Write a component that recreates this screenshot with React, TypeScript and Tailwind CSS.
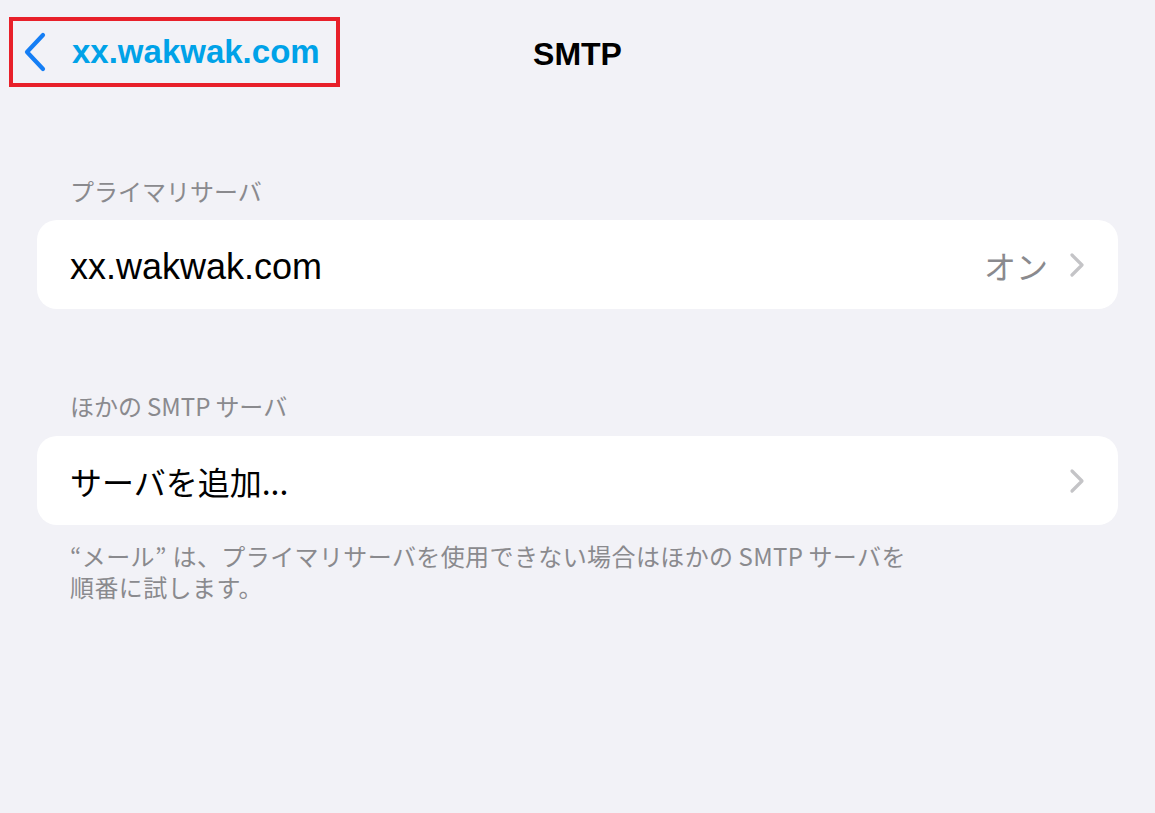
const jp = "font-['Noto_Sans_CJK_JP',sans-serif]";
const latin = "font-['Liberation_Sans','Noto_Sans_CJK_JP',sans-serif]";

const RowChevron = () => (
  <svg width="18" height="26" viewBox="0 0 18 26" className="shrink-0">
    <polyline
      points="4,3 14,13 4,23"
      fill="none"
      stroke="#c4c4c7"
      strokeWidth="3.2"
      strokeLinecap="round"
      strokeLinejoin="round"
    />
  </svg>
);

const SectionHeader = ({ children }: { children: React.ReactNode }) => (
  <div className={`${jp} px-[33px] text-[24px] leading-[30px] text-[#8a8a8e]`}>{children}</div>
);

export default function App() {
  return (
    <div className="w-[1155px] h-[813px] bg-[#f2f2f7] overflow-hidden">
      {/* Nav bar */}
      <div className="relative h-[87px]">
        <div className="absolute left-[9px] top-[17px] w-[331px] h-[70px] border-4 border-[#e8202a] flex items-center">
          <svg width="24" height="40" viewBox="0 0 24 40" className="ml-[10px] shrink-0">
            <polyline
              points="20,3 4,20 20,37"
              fill="none"
              stroke="#157ef5"
              strokeWidth="4.2"
              strokeLinecap="round"
              strokeLinejoin="round"
            />
          </svg>
          <span className={`${latin} ml-[25px] text-[33px] leading-[40px] font-bold text-[#00a2e8]`}>
            xx.wakwak.com
          </span>
        </div>
        <div className={`${latin} absolute left-0 right-0 top-[34px] text-center text-[32px] leading-[40px] font-bold text-black`}>
          SMTP
        </div>
      </div>

      <div className="px-[37px]">
        {/* Primary server */}
        <div className="mt-[89px]">
          <SectionHeader>プライマリサーバ</SectionHeader>
        </div>
        <div className="mt-[14px] h-[89px] rounded-[20px] bg-white flex items-center pl-[33px] pr-[32px]">
          <span className={`${latin} flex-1 pt-[4px] text-[36px] leading-[40px] text-black`}>xx.wakwak.com</span>
          <span className={`${jp} text-[32px] leading-[40px] text-[#8a8a8e] mr-[20px]`}>オン</span>
          <RowChevron />
        </div>

        {/* Other SMTP servers */}
        <div className="mt-[82px]">
          <SectionHeader>
            ほかの<span className="ml-[5px] mr-[5px]">SMTP</span>サーバ
          </SectionHeader>
        </div>
        <div className="mt-[15px] h-[89px] rounded-[20px] bg-white flex items-center pl-[33px] pr-[32px]">
          <span className={`${jp} flex-1 text-[32px] leading-[40px] text-black`}>サーバを追加...</span>
          <RowChevron />
        </div>

        <div className={`${jp} mt-[15px] px-[33px] text-[24px] tracking-[0.4px] text-[#8a8a8e] whitespace-nowrap`}>
          <div className="h-[31px] leading-[31px]">
            “メール” は、プライマリサーバを使用できない場合はほかの<span className="ml-[5px] mr-[5px]">SMTP</span>サーバを
          </div>
          <div className="h-[31px] leading-[31px]">順番に試します。</div>
        </div>
      </div>
    </div>
  );
}
